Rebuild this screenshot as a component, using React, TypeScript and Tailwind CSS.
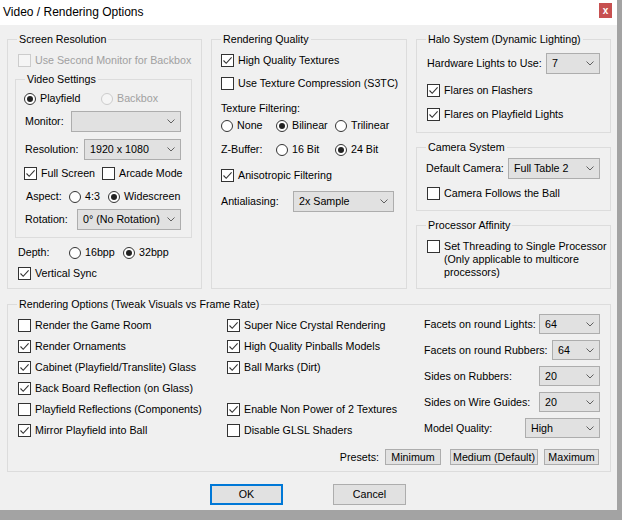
import type { ReactNode } from "react";

function CheckBox({ checked, disabled }: { checked?: boolean; disabled?: boolean }) {
  return (
    <span
      className={`flex h-[13px] w-[13px] shrink-0 items-center justify-center border ${
        disabled ? "border-[#cccccc] bg-[#f5f5f5]" : "border-[#333333] bg-white"
      }`}
    >
      {checked && (
        <svg width="11" height="11" viewBox="0 0 11 11">
          <path d="M1.5 5.5L4.2 8.3L9.6 2.4" fill="none" stroke="#333333" strokeWidth="1.1" />
        </svg>
      )}
    </span>
  );
}

function Check({
  label,
  checked,
  disabled,
  className = "",
}: {
  label: string;
  checked?: boolean;
  disabled?: boolean;
  className?: string;
}) {
  return (
    <div className={`flex h-[17px] items-center ${className}`}>
      <CheckBox checked={checked} disabled={disabled} />
      <span className={`ml-[4px] whitespace-nowrap ${disabled ? "text-[#a0a0a0]" : ""}`}>{label}</span>
    </div>
  );
}

function Radio({
  label,
  checked,
  disabled,
  className = "",
}: {
  label: string;
  checked?: boolean;
  disabled?: boolean;
  className?: string;
}) {
  return (
    <div className={`flex h-[17px] items-center ${className}`}>
      <span
        className={`flex h-[12px] w-[12px] shrink-0 items-center justify-center rounded-full border ${
          disabled ? "border-[#cccccc] bg-[#f5f5f5]" : "border-[#333333] bg-white"
        }`}
      >
        {checked && <span className="h-[6px] w-[6px] rounded-full bg-[#222222]" />}
      </span>
      <span className={`ml-[4px] whitespace-nowrap ${disabled ? "text-[#a0a0a0]" : ""}`}>{label}</span>
    </div>
  );
}

function Select({ value, className = "" }: { value: string; className?: string }) {
  return (
    <div
      className={`flex shrink-0 items-center justify-between border border-[#adadad] bg-[#e1e1e1] pl-[5px] pr-[5px] ${className}`}
    >
      <span className="whitespace-nowrap">{value}</span>
      <svg width="8" height="5" viewBox="0 0 8 5">
        <path d="M0.5 0.5L4 4L7.5 0.5" fill="none" stroke="#606060" strokeWidth="1" />
      </svg>
    </div>
  );
}

function Group({ title, className = "", children }: { title: string; className?: string; children: ReactNode }) {
  return (
    <fieldset className={`border border-[#dcdcdc] ${className}`}>
      <legend className="ml-[9px] px-[2px] leading-[13px]">{title}</legend>
      {children}
    </fieldset>
  );
}

function Button({ label, primary }: { label: string; primary?: boolean }) {
  return (
    <div
      className={`flex h-[21px] w-[73px] items-center justify-center bg-[#e1e1e1] ${
        primary ? "border-2 border-[#0078d7]" : "border border-[#adadad]"
      }`}
    >
      {label}
    </div>
  );
}

function SmallButton({ label, className = "" }: { label: string; className?: string }) {
  return (
    <div className={`flex h-[16px] items-center justify-center border border-[#adadad] bg-[#e1e1e1] ${className}`}>
      {label}
    </div>
  );
}

export default function App() {
  return (
    <div className="h-[520px] w-[622px] overflow-hidden bg-[#a3a3a3] font-[family-name:'Liberation_Sans',Arial,sans-serif] text-[10.7px] leading-[13px] text-black">
      <div className="flex h-[510px] w-[617px] flex-col bg-[#f0f0f0]">
        {/* Title bar */}
        <div className="flex h-[25px] shrink-0 items-start justify-between bg-white">
          <span className="ml-[3px] mt-[5px] text-[12px] leading-[14px]">Video / Rendering Options</span>
          <span className="mr-[5px] mt-[3px] flex h-[15px] w-[13px] items-center justify-center bg-[#c75050] text-[10px] font-bold leading-[10px] text-white">
            x
          </span>
        </div>

        <div className="flex flex-col pl-[7px] pt-[8px]">
          {/* Top row */}
          <div className="flex gap-[9px]">
            {/* Screen Resolution */}
            <Group title="Screen Resolution" className="h-[256px] w-[195px]">
              <Check label="Use Second Monitor for Backbox" disabled className="ml-[10px] mt-[6px]" />
              <Group title="Video Settings" className="ml-[7px] mt-[4px] h-[165px] w-[177px]">
                <div className="ml-[8px] mt-[4px] flex h-[17px] items-center">
                  <Radio label="Playfield" checked className="w-[77px]" />
                  <Radio label="Backbox" disabled />
                </div>
                <div className="mt-[4px] flex items-center justify-between pl-[9px] pr-[10px]">
                  <span>Monitor:</span>
                  <Select value="" className="h-[21px] w-[110px]" />
                </div>
                <div className="mt-[7px] flex items-center justify-between pl-[9px] pr-[10px]">
                  <span>Resolution:</span>
                  <Select value="1920 x 1080" className="h-[21px] w-[97px]" />
                </div>
                <div className="ml-[8px] mt-[5px] flex h-[17px] items-center">
                  <Check label="Full Screen" checked className="w-[78px]" />
                  <Check label="Arcade Mode" />
                </div>
                <div className="ml-[10px] mt-[6px] flex h-[17px] items-center">
                  <span className="w-[43px]">Aspect:</span>
                  <Radio label="4:3" className="w-[39px]" />
                  <Radio label="Widescreen" checked />
                </div>
                <div className="mt-[4px] flex items-center justify-between pl-[9px] pr-[10px]">
                  <span>Rotation:</span>
                  <Select value="0° (No Rotation)" className="h-[21px] w-[104px]" />
                </div>
              </Group>
              <div className="ml-[10px] mt-[6px] flex h-[17px] items-center">
                <span className="w-[51px]">Depth:</span>
                <Radio label="16bpp" className="w-[54px]" />
                <Radio label="32bpp" checked />
              </div>
              <Check label="Vertical Sync" checked className="ml-[10px] mt-[4px]" />
            </Group>

            {/* Rendering Quality */}
            <Group title="Rendering Quality" className="h-[256px] w-[196px]">
              <div className="pl-[9px]">
                <Check label="High Quality Textures" checked className="mt-[6px]" />
                <Check label="Use Texture Compression (S3TC)" className="mt-[6px]" />
                <div className="mt-[10px]">Texture Filtering:</div>
                <div className="mt-[2px] flex h-[17px] items-center">
                  <Radio label="None" className="w-[55px]" />
                  <Radio label="Bilinear" checked className="w-[59px]" />
                  <Radio label="Trilinear" />
                </div>
                <div className="mt-[7px] flex h-[17px] items-center">
                  <span className="w-[55px]">Z-Buffer:</span>
                  <Radio label="16 Bit" className="w-[59px]" />
                  <Radio label="24 Bit" checked />
                </div>
                <Check label="Anisotropic Filtering" checked className="mt-[9px]" />
                <div className="mt-[7px] flex items-center">
                  <span className="w-[72px]">Antialiasing:</span>
                  <Select value="2x Sample" className="h-[21px] w-[101px]" />
                </div>
              </div>
            </Group>

            {/* Right column */}
            <div className="flex w-[195px] flex-col">
              <Group title="Halo System (Dynamic Lighting)" className="h-[100px] w-[195px]">
                <div className="pl-[10px]">
                  <div className="mt-[7px] flex items-center">
                    <span className="w-[119px]">Hardware Lights to Use:</span>
                    <Select value="7" className="h-[21px] w-[54px]" />
                  </div>
                  <Check label="Flares on Flashers" checked className="mt-[8px]" />
                  <Check label="Flares on Playfield Lights" checked className="mt-[7px]" />
                </div>
              </Group>
              <Group title="Camera System" className="mt-[8px] h-[70px] w-[195px]">
                <div className="mt-[4px] flex items-center pl-[9px]">
                  <span className="w-[82px]">Default Camera:</span>
                  <Select value="Full Table 2" className="h-[21px] w-[92px]" />
                </div>
                <Check label="Camera Follows the Ball" className="ml-[10px] mt-[6px]" />
              </Group>
              <Group title="Processor Affinity" className="mt-[8px] h-[70px] w-[195px]">
                <div className="ml-[10px] mt-[8px] flex items-start">
                  <CheckBox />
                  <span className="ml-[4px] whitespace-nowrap">
                    Set Threading to Single Processor
                    <br />
                    (Only applicable to multicore
                    <br />
                    processors)
                  </span>
                </div>
              </Group>
            </div>
          </div>

          {/* Rendering Options */}
          <Group title="Rendering Options (Tweak Visuals vs Frame Rate)" className="mt-[9px] h-[174px] w-[604px]">
            <div className="mt-[3px] flex items-start">
              <div className="ml-[10px] flex w-[209px] flex-col gap-[4px] pt-[3px]">
                <Check label="Render the Game Room" />
                <Check label="Render Ornaments" checked />
                <Check label="Cabinet (Playfield/Translite) Glass" checked />
                <Check label="Back Board Reflection (on Glass)" checked />
                <Check label="Playfield Reflections (Components)" />
                <Check label="Mirror Playfield into Ball" checked />
              </div>
              <div className="flex w-[197px] flex-col gap-[4px] pt-[3px]">
                <Check label="Super Nice Crystal Rendering" checked />
                <Check label="High Quality Pinballs Models" checked />
                <Check label="Ball Marks (Dirt)" checked />
                <div className="h-[17px]" />
                <Check label="Enable Non Power of 2 Textures" checked />
                <Check label="Disable GLSL Shaders" />
              </div>
              <div className="flex w-[176px] flex-col gap-[6px]">
                <div className="flex items-center justify-between">
                  <span>Facets on round Lights:</span>
                  <Select value="64" className="h-[20px] w-[61px]" />
                </div>
                <div className="flex items-center justify-between">
                  <span>Facets on round Rubbers:</span>
                  <Select value="64" className="h-[20px] w-[48px]" />
                </div>
                <div className="flex items-center justify-between">
                  <span>Sides on Rubbers:</span>
                  <Select value="20" className="h-[20px] w-[61px]" />
                </div>
                <div className="flex items-center justify-between">
                  <span>Sides on Wire Guides:</span>
                  <Select value="20" className="h-[20px] w-[61px]" />
                </div>
                <div className="flex items-center justify-between">
                  <span>Model Quality:</span>
                  <Select value="High" className="h-[20px] w-[75px]" />
                </div>
              </div>
            </div>
            <div className="mt-[10px] flex items-center justify-end pr-[11px]">
              <span className="mr-[6px]">Presets:</span>
              <SmallButton label="Minimum" className="w-[56px]" />
              <SmallButton label="Medium (Default)" className="ml-[9px] w-[88px]" />
              <SmallButton label="Maximum" className="ml-[6px] w-[55px]" />
            </div>
          </Group>

          {/* Dialog buttons */}
          <div className="ml-[203px] mt-[12px] flex gap-[50px]">
            <Button label="OK" primary />
            <Button label="Cancel" />
          </div>
        </div>
      </div>
    </div>
  );
}
